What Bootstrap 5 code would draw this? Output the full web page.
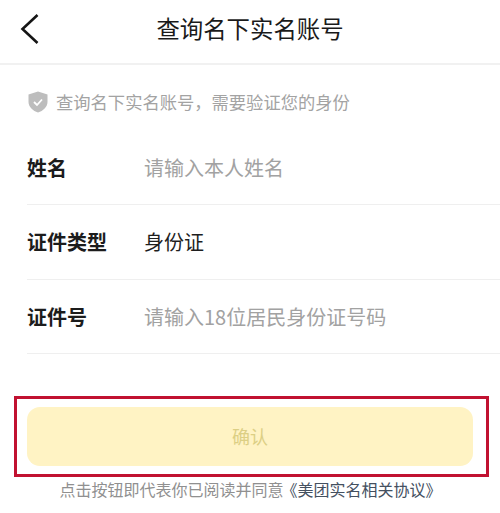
<!DOCTYPE html>
<html lang="zh-CN">
<head>
<meta charset="utf-8">
<title>查询名下实名账号</title>
<link href="https://cdn.jsdelivr.net/npm/bootstrap@5.3.0/dist/css/bootstrap.min.css" rel="stylesheet">
<style>
html, body { height: 513px; overflow: hidden; }
body { background: #fff; font-family: "Noto Sans CJK SC", "Liberation Sans", sans-serif; color: #151515; }
.top-bar { height: 65px; border-bottom: 2px solid #f1f1f1; padding-bottom: 5px; position: relative; }
.top-title { font-size: 23.4px; line-height: 1; color: #1a1a1a; }
.back-ico { position: absolute; left: 19px; top: 13px; }
.notice-row { height: 76px; padding-left: 28px; gap: 8px; padding-bottom: 3px; font-size: 17.3px; color: #a3a3a3; }
.form-area { padding-left: 27px; margin-top: -9px; }
.field-row { height: 75px; border-bottom: 1px solid #efefef; font-size: 20px; }
.field-row:first-child { height: 73px; }
.field-row:last-child { height: 74px; }
.field-label { width: 117px; font-weight: 700; color: #1c1c1c; flex-shrink: 0; }
.field-hint { color: #a2a2a2; }
.field-val { color: #1e1e1e; }
.mark-box { margin: 42px 11px 0 14px; height: 81px; border: 3px solid #c11131; padding: 8px 13px 8px 10px; }
.confirm-btn { height: 59px; width: 100%; background: #fff3c4; border: 0; border-radius: 13px; font-size: 18px; color: #dccf84; }
.agree-line { font-size: 16px; line-height: 1; margin-top: 4px; color: #909090; padding-left: 1px; }
.agree-link { color: #44505f; margin-left: -2px; }
</style>
</head>
<body>
<header class="top-bar d-flex align-items-center justify-content-center">
  <svg class="back-ico" width="20" height="32" viewBox="0 0 20 32" fill="none" aria-hidden="true"><path d="M18.5 2 L3.5 16 L18.5 30" stroke="#151515" stroke-width="2.6"/></svg>
  <div class="top-title">查询名下实名账号</div>
</header>
<div class="notice-row d-flex align-items-center">
  <svg width="20" height="22" viewBox="0 0 20 22" aria-hidden="true"><path d="M10 0.5 L19.5 3.5 V11 C19.5 16 15 20 10 21.5 C5 20 0.5 16 0.5 11 V3.5 Z" fill="#bdbdbd"/><path d="M6 11 L9 14 L14 8.5" fill="none" stroke="#fff" stroke-width="1.8"/></svg>
  <span>查询名下实名账号，需要验证您的身份</span>
</div>
<div class="form-area">
  <div class="field-row d-flex align-items-center"><div class="field-label">姓名</div><div class="field-hint">请输入本人姓名</div></div>
  <div class="field-row d-flex align-items-center"><div class="field-label">证件类型</div><div class="field-val">身份证</div></div>
  <div class="field-row d-flex align-items-center"><div class="field-label">证件号</div><div class="field-hint">请输入18位居民身份证号码</div></div>
</div>
<div class="mark-box"><button type="button" class="btn confirm-btn p-0">确认</button></div>
<div class="agree-line text-center">点击按钮即代表你已阅读并同意<span class="agree-link">《美团实名相关协议》</span></div>
<script src="https://cdn.jsdelivr.net/npm/bootstrap@5.3.0/dist/js/bootstrap.bundle.min.js"></script>
</body>
</html>
